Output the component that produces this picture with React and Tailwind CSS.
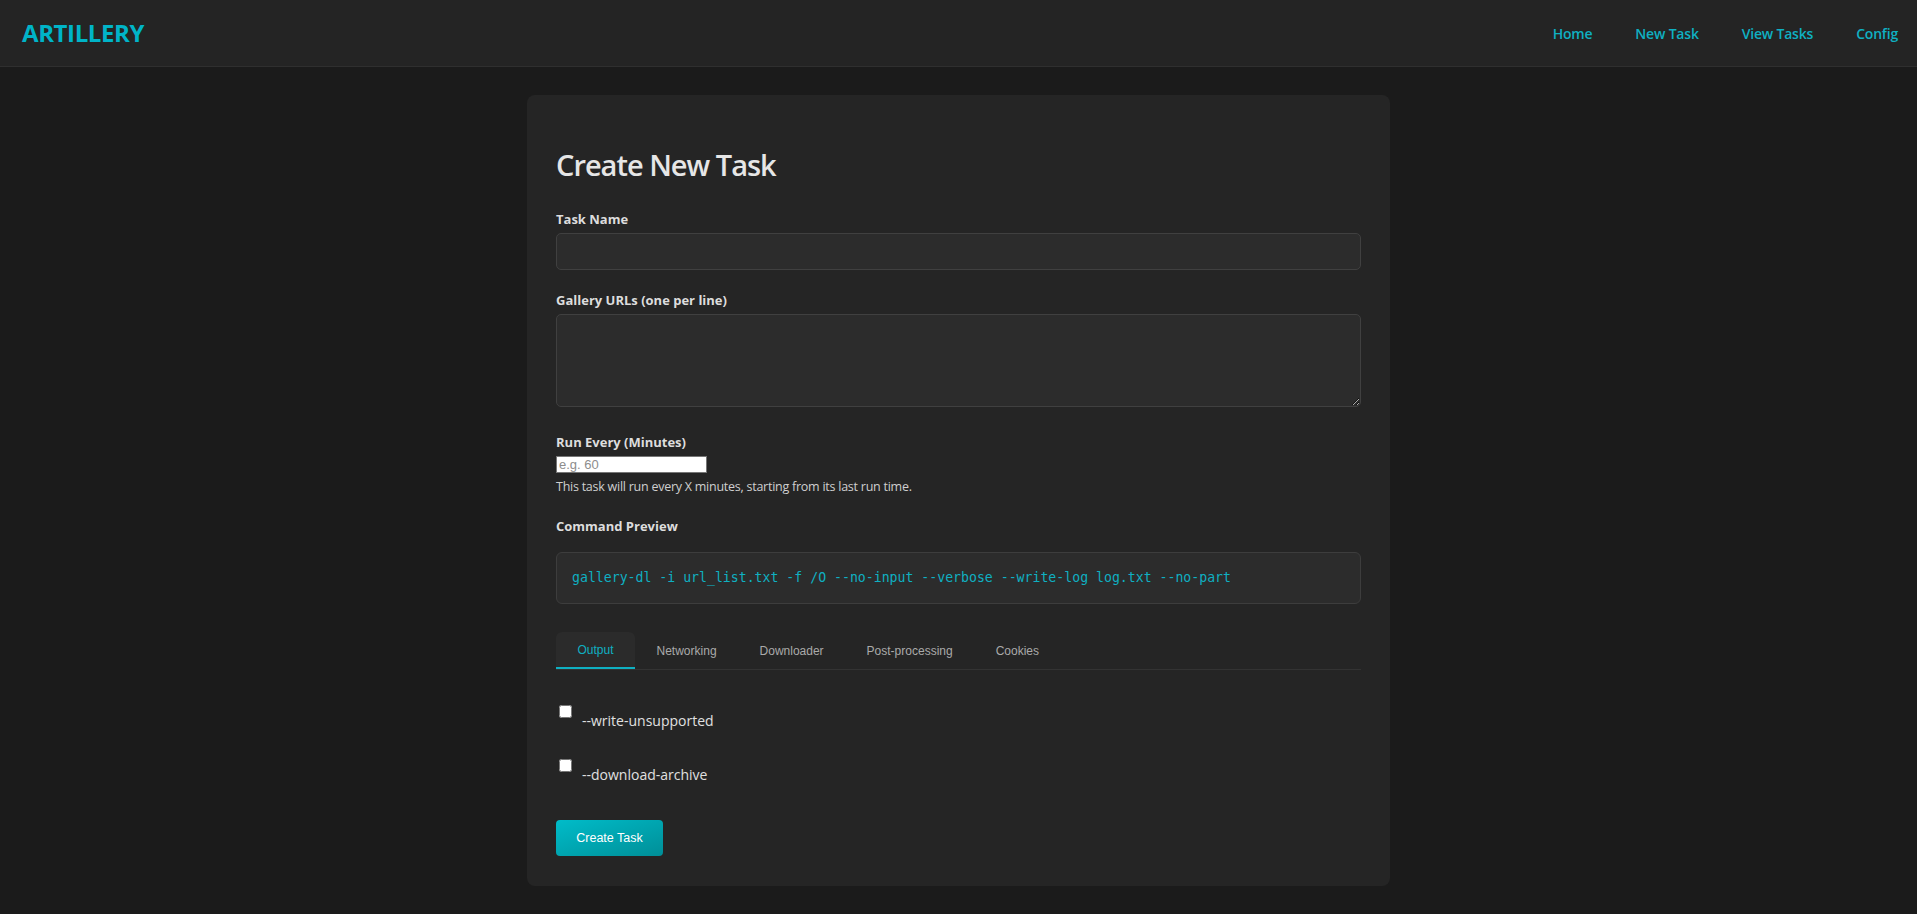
import React, { useState } from 'react';

const tabs = ['Output', 'Networking', 'Downloader', 'Post-processing', 'Cookies'];

const App = () => {
  const [activeTab, setActiveTab] = useState('Output');

  return (
    <div className="min-h-screen bg-[#1b1b1b] font-['Open_Sans',sans-serif]">
      <header className="h-[67px] bg-[#242424] border-b border-[#2f2f2f] flex items-center justify-between pl-[22px] pr-[19px]">
        <div className="text-[24px] font-bold text-[#00b4c8] tracking-[-0.4px]">ARTILLERY</div>
        <nav className="flex items-center gap-[43px] text-[14px] font-semibold text-[#0fb0c2] tracking-[-0.2px]">
          <a href="#">Home</a>
          <a href="#">New Task</a>
          <a href="#">View Tasks</a>
          <a href="#">Config</a>
        </nav>
      </header>

      <main className="pt-[28px] pb-[29px]">
        <div className="w-[863px] mx-auto bg-[#252525] rounded-lg px-[29px] pt-[29px] pb-[30px]">
          <h1 className="mt-[22px] mb-[25px] text-[29px] leading-[38px] font-semibold text-[#e6e6e6] tracking-[-1px]">
            Create New Task
          </h1>

          <label className="block text-[13px] leading-[20px] font-bold text-[#dddddd]">Task Name</label>
          <input
            type="text"
            className="mt-[4px] block w-full h-[37px] bg-[#2c2c2c] border border-[#404040] rounded-[5px] px-3 text-[#ddd] outline-none"
          />

          <label className="mt-[20px] block text-[13px] leading-[20px] font-bold text-[#dddddd]">
            Gallery URLs (one per line)
          </label>
          <textarea className="mt-[4px] block w-full h-[93px] bg-[#2c2c2c] border border-[#404040] rounded-[5px] px-3 py-2 text-[#ddd] outline-none" />

          <label className="mt-[25px] block text-[13px] leading-[20px] font-bold text-[#dddddd]">
            Run Every (Minutes)
          </label>
          <input
            type="text"
            placeholder="e.g. 60"
            className="mt-[4px] block w-[151px] h-[17px] bg-white border border-[#767676] px-[2px] text-[13px] text-black font-['Liberation_Sans',Arial,sans-serif] placeholder:text-[#8d8d8d] outline-none"
          />
          <p className="mt-[5px] text-[12.5px] leading-[18px] text-[#cfcfcf] tracking-[-0.25px]">
            This task will run every X minutes, starting from its last run time.
          </p>

          <label className="mt-[20px] block text-[13px] leading-[20px] font-bold text-[#dddddd]">Command Preview</label>
          <div className="mt-[16px] h-[52px] flex items-center bg-[#2c2c2c] border border-[#3d3d3d] rounded-[6px] px-[15px]">
            <code className="font-['DejaVu_Sans_Mono',monospace] text-[13.2px] text-[#0fb0c2] whitespace-pre">
              gallery-dl -i url_list.txt -f /O --no-input --verbose --write-log log.txt --no-part
            </code>
          </div>

          <div className="mt-[28px] flex border-b border-[#333333] font-['Liberation_Sans',Arial,sans-serif] text-[12px]">
            {tabs.map((t) => (
              <button
                key={t}
                onClick={() => setActiveTab(t)}
                className={
                  t === activeTab
                    ? 'h-[37px] px-[21.5px] rounded-t-[6px] bg-[#2b2b2b] text-[#0fb0c2] border-b-2 border-[#0fb0c2] -mb-px'
                    : 'h-[37px] px-[21.5px] text-[#aaaaaa]'
                }
              >
                {t}
              </button>
            ))}
          </div>

          <div className="pt-[35px]">
            <label className="flex items-start">
              <input type="checkbox" className="ml-[3px] w-[13px] h-[13px]" />
              <span className="ml-[10px] mt-[6px] text-[14px] leading-[20px] text-[#e0e0e0]">--write-unsupported</span>
            </label>
            <label className="mt-[28px] flex items-start">
              <input type="checkbox" className="ml-[3px] w-[13px] h-[13px]" />
              <span className="ml-[10px] mt-[6px] text-[14px] leading-[20px] text-[#e0e0e0]">--download-archive</span>
            </label>
          </div>

          <button className="mt-[35px] w-[107px] h-[36px] rounded-[4px] bg-gradient-to-br from-[#00bcc9] to-[#008f98] text-white text-[12.5px] font-['Liberation_Sans',Arial,sans-serif]">
            Create Task
          </button>
        </div>
      </main>
    </div>
  );
};

export default App;
